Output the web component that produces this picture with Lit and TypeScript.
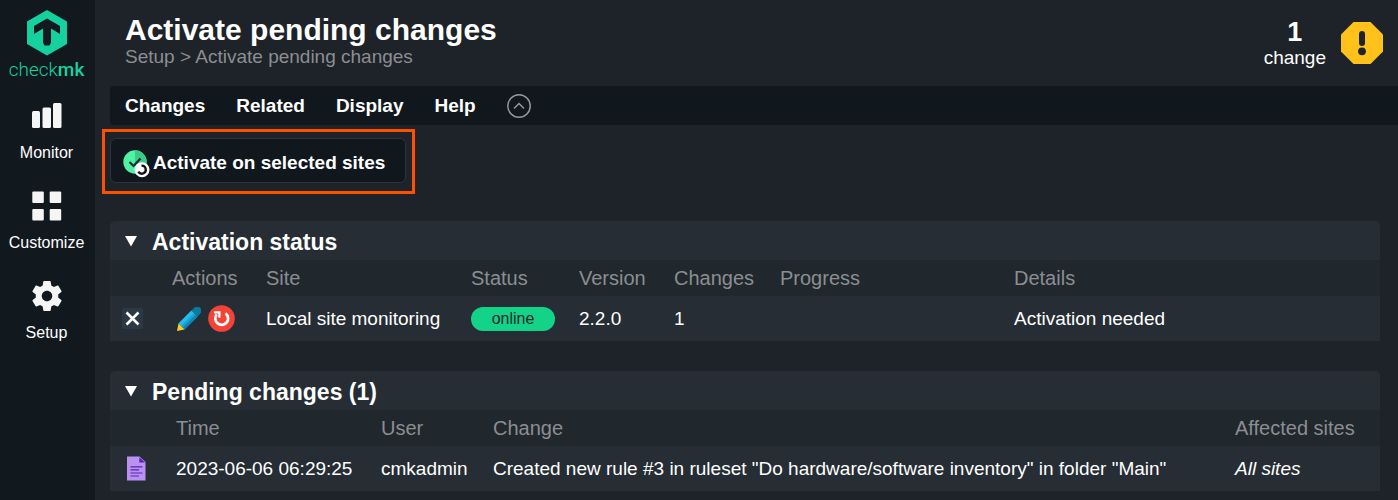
import { LitElement, html, css, svg } from "lit";
import { customElement, property, state } from "lit/decorators.js";

const icons = {
  logo: svg`<svg width="40" height="46" viewBox="0 0 40 46" aria-hidden="true">
    <path fill="#15d1a0" d="M20 0 40 11.500V34L20 45.500 0 34V11.500z"/>
    <path fill="#12191f" d="M20 8.500 33 16V24L24 18.500V32.500l-1.500 3h-5l-1.500-3V18.500L7 24V16z"/></svg>`,
  monitor: svg`<svg width="30" height="26" viewBox="0 0 30 26" aria-hidden="true" fill="#f5f5f5">
    <rect x="0" y="8" width="8" height="17" rx="1.500"/><rect x="10.500" y="4.500" width="8.500" height="20.500" rx="1.500"/><rect x="21" y="0" width="8.500" height="25" rx="1.500"/></svg>`,
  customize: svg`<svg width="30" height="30" viewBox="0 0 30 30" aria-hidden="true" fill="#f5f5f5">
    <rect width="11.500" height="11.500" x=".3" y=".5" rx="1"/><rect x="17.700" y=".5" width="11.500" height="11.500" rx="1"/><rect x=".3" y="18" width="11.500" height="11.500" rx="1"/><rect x="17.700" y="18" width="11.500" height="11.500" rx="1"/></svg>`,
  setup: svg`<svg width="36" height="36" viewBox="0 0 24 24" aria-hidden="true">
    <path fill="#f5f5f5" d="M19.430 12.980c.04-.32.07-.64.07-.98s-.03-.66-.07-.98l2.110-1.650c.19-.15.24-.42.12-.64l-2-3.460c-.12-.22-.39-.3-.61-.22l-2.490 1c-.52-.4-1.080-.73-1.690-.98l-.38-2.650C14.460 2.180 14.250 2 14 2h-4c-.25 0-.46.18-.49.42l-.38 2.650c-.61.25-1.170.59-1.690.98l-2.490-1c-.23-.09-.49 0-.61.22l-2 3.460c-.13.22-.07.49.12.64l2.110 1.650c-.04.32-.07.65-.07.98s.03.66.07.98l-2.110 1.650c-.19.15-.24.42-.12.64l2 3.460c.12.22.39.3.61.22l2.490-1c.52.4 1.080.73 1.690.98l.38 2.650c.03.24.24.42.49.42h4c.25 0 .46-.18.49-.42l.38-2.650c.61-.25 1.170-.59 1.690-.98l2.490 1c.23.09.49 0 .61-.22l2-3.460c.12-.22.07-.49-.12-.64l-2.110-1.650zM12 15.500c-1.930 0-3.500-1.570-3.500-3.500s1.570-3.500 3.500-3.500 3.500 1.570 3.500 3.500-1.570 3.500-3.500 3.500z"/></svg>`,
  warning: svg`<svg width="42" height="42" viewBox="0 0 42 42" aria-hidden="true">
    <path fill="#ffc21a" d="M12.500 0h17L42 12.500v17L29.500 42h-17L0 29.500v-17z"/>
    <rect x="18" y="9" width="6" height="15" rx="3" fill="#1e2229"/><circle cx="21" cy="29.300" r="3.900" fill="#1e2229"/></svg>`,
  collapse: svg`<svg width="24" height="24" viewBox="0 0 24 24" aria-hidden="true" fill="none" stroke="#96989b">
    <circle cx="12" cy="12" r="11.200" stroke-width="1.500"/><path stroke-width="1.500" d="m7 14.500 5-5 5 5"/></svg>`,
  activate: svg`<svg width="28" height="28" viewBox="0 0 28 28" aria-hidden="true">
    <circle cx="12" cy="12" r="11.700" fill="#4ff3a4"/><path fill="#3bcb87" d="M12 .3a11.700 11.700 0 0 1 0 23.400z"/>
    <path d="m6.500 12 4 4 7-7.500" fill="none" stroke="#1e2b33" stroke-width="2.200"/>
    <circle cx="19" cy="19.700" r="7.500" fill="#fff"/>
    <path d="M18.500 15.700a4 4 0 1 1-3.200 6" fill="none" stroke="#111" stroke-width="2.300"/></svg>`,
  edit: svg`<svg width="26" height="26" viewBox="0 0 26 26" aria-hidden="true">
    <path fill="#14a5d8" d="m2.500 17.500 13-13 6 6-13 13z"/><path fill="#2bb9ea" d="m2.500 17.500 13-13 2.500 2.500-13 13z"/>
    <path fill="#0b87b0" d="m8.500 23.500 13-13-1.800-1.800-13 13z"/>
    <path fill="#087ba0" d="m15.500 4.500 2.700-2.700a3 3 0 0 1 2.300-.8h1.500a3 3 0 0 1 3 3v1.200a3 3 0 0 1-.8 2.600l-2.700 2.700z"/>
    <path fill="#ffca28" d="m2.500 17.500 6 6L1 25z"/></svg>`,
  restart: svg`<svg width="27" height="27" viewBox="0 0 27 27" aria-hidden="true">
    <circle cx="13.500" cy="13.500" r="13.300" fill="#f44336"/>
    <path d="M17.500 8.300a6.400 6.400 0 1 1-8.700 1" fill="none" stroke="#fff" stroke-width="2.700"/>
    <path fill="#fff" d="M6 6.200h6.500v6.600h-2.200V8.400H6z"/></svg>`,
  document: svg`<svg width="19" height="25" viewBox="0 0 19 25" aria-hidden="true">
    <path fill="#b992ef" d="M0 .5h12.500L18.500 6v18.500H0z"/><path fill="#5b22b4" d="M12.300 1.200v5.300h5.700z"/>
    <path stroke="#5b22b4" stroke-width="1.200" d="M3.500 10.800h12M3.500 13.900h8.500M3.500 17h12M3.500 20h8.500"/></svg>`,
  arrow: svg`<svg width="12" height="11" viewBox="0 0 12 11" aria-hidden="true"><path fill="#fff" d="M0 0h12L6 10.500z"/></svg>`,
};

@customElement("side-nav")
class SideNav extends LitElement {
  static styles = css`
    :host { display: block; padding-right: 2px; background: #11181e; }
    .brand { display: flex; flex-direction: column; align-items: center; height: 89px; padding-top: 10px; box-sizing: border-box; color: #15d1a0; text-decoration: none; }
    .name { font: 300 19px/24px Roboto, sans-serif; margin-top: 2px; }
    .name b { font-weight: 500; }
    .nav { display: flex; flex-direction: column; }
    .item { display: flex; flex-direction: column; align-items: center; height: 90px; color: #fff; font-size: 16px; line-height: 20px; text-decoration: none; }
    .glyph { display: flex; align-items: center; justify-content: center; height: 54px; }
    .label { margin-top: 0; }
  `;
  private items = [
    { label: "Monitor", icon: icons.monitor },
    { label: "Customize", icon: icons.customize },
    { label: "Setup", icon: icons.setup },
  ];
  render() {
    return html`<a class="brand" href="#home">${icons.logo}<span class="name">check<b>mk</b></span></a>
      <nav class="nav">${this.items.map((i) => html`<a class="item" href="#${i.label}"><span class="glyph">${i.icon}</span><span class="label">${i.label}</span></a>`)}</nav>`;
  }
}

@customElement("fold-panel")
class FoldPanel extends LitElement {
  @property() heading = "";
  @state() private open = true;
  static styles = css`
    :host { display: block; background: #262d34; border-radius: 5px 5px 0 0; }
    .title { margin: 0; font-size: 23px; line-height: 39px; }
    .toggle { display: flex; align-items: center; gap: 15px; width: 100%; height: 39px; padding: 4px 15px 0; border: 0; background: none; color: #fff; font: inherit; line-height: 35px; text-align: left; }
    .toggle svg { margin-bottom: 3px; }
  `;
  render() {
    return html`<h2 class="title"><button class="toggle" aria-expanded=${this.open} @click=${() => (this.open = !this.open)}>${icons.arrow}${this.heading}</button></h2>
      ${this.open ? html`<slot></slot>` : ""}`;
  }
}

@customElement("app-root")
class AppRoot extends LitElement {
  static styles = css`
    :host { display: grid; grid-template-columns: 95px minmax(0, 1fr); min-height: 100vh; background: #1e2229; color: #fff; font: 19px/24px "Liberation Sans", Arial, sans-serif; }
    button { font: inherit; color: inherit; background: none; border: 0; padding: 0; }
    .main { padding-left: 15px; }
    .header { display: flex; justify-content: space-between; height: 86px; padding: 14px 15px 0; box-sizing: border-box; }
    .title { margin: 0; font-size: 30px; line-height: 32px; }
    .crumbs { color: #8c8e91; line-height: 22px; }
    .crumbs a { color: inherit; text-decoration: none; }
    .pending { display: flex; gap: 15px; padding-top: 4px; }
    .pending svg { margin-top: 4px; }
    .count { display: flex; flex-direction: column; text-align: center; }
    .count b { font-size: 27px; line-height: 28px; }
    .menu { display: flex; align-items: center; gap: 31px; height: 39px; padding: 0 15px; background: #10171d; border-radius: 4px 0 0 4px; font-weight: bold; }
    .menu svg { display: block; }
    .highlight { width: fit-content; margin: 4px 0 27px -8px; padding: 6px 6px 8px 5px; border: 3px solid #ff5000; }
    .activate { display: flex; align-items: center; gap: 2px; height: 45px; padding: 4px 20px 0 12px; background: #10171d; border: 1px solid #2c343e; border-radius: 6px; font-weight: bold; }
    .activate svg { margin-top: 2px; }
    .panels { display: flex; flex-direction: column; gap: 30px; padding: 0 18px 9px 0; }
    .grid { width: 100%; table-layout: fixed; border-collapse: collapse; white-space: nowrap; }
    .grid th { height: 36px; padding: 0; background: #20272d; color: #8c8e91; font-size: 20px; font-weight: normal; text-align: left; }
    .grid td { height: 45px; padding: 0; }
    .grid .lead { padding-left: 12px; }
    .lead svg { display: block; margin-left: 5px; }
    .w-lead { width: 62px; } .w-act { width: 94px; } .w-site { width: 205px; } .w-status { width: 108px; }
    .w-ver { width: 95px; } .w-chg { width: 106px; } .w-prog { width: 234px; }
    .w-icon { width: 66px; } .w-time { width: 205px; } .w-user { width: 112px; } .w-aff { width: 145px; }
    .check { display: block; appearance: none; width: 21px; height: 21px; margin: 0; border-radius: 2px; background: #2c3845; }
    .check:checked { background: #2c3845 url("data:image/svg+xml,%3Csvg xmlns='http://www.w3.org/2000/svg' viewBox='0 0 21 21'%3E%3Cpath d='m4.500 4.500 12 12m0-12-12 12' stroke='white' stroke-width='2.600'/%3E%3C/svg%3E"); }
    .actions { display: flex; gap: 6px; padding-left: 4px; }
    .actions svg { display: block; }
    .online { display: block; width: 84px; border-radius: 12px; background: #13d389; color: #1e262e; font-size: 16px; line-height: 24px; text-align: center; }
  `;
  render() {
    return html`
      <side-nav></side-nav>
      <main class="main">
        <header class="header">
          <div>
            <h1 class="title">Activate pending changes</h1>
            <div class="crumbs"><a href="#setup">Setup</a> &gt; <a href="#activate">Activate pending changes</a></div>
          </div>
          <div class="pending"><div class="count"><b>1</b><span>change</span></div>${icons.warning}</div>
        </header>
        <nav class="menu">
          ${["Changes", "Related", "Display", "Help"].map((m) => html`<button>${m}</button>`)}
          <button aria-label="Hide page actions">${icons.collapse}</button>
        </nav>
        <div class="highlight"><button class="activate">${icons.activate}Activate on selected sites</button></div>
        <div class="panels">
          <fold-panel heading="Activation status">
            <table class="grid">
              <colgroup><col class="w-lead"><col class="w-act"><col class="w-site"><col class="w-status"><col class="w-ver"><col class="w-chg"><col class="w-prog"><col></colgroup>
              <thead><tr><th></th><th>Actions</th><th>Site</th><th>Status</th><th>Version</th><th>Changes</th><th>Progress</th><th>Details</th></tr></thead>
              <tbody><tr>
                <td class="lead"><input class="check" type="checkbox" checked aria-label="Local site monitoring"></td>
                <td><div class="actions"><button aria-label="Edit">${icons.edit}</button><button aria-label="Restart">${icons.restart}</button></div></td>
                <td>Local site monitoring</td><td><span class="online">online</span></td><td>2.2.0</td><td>1</td><td></td><td>Activation needed</td>
              </tr></tbody>
            </table>
          </fold-panel>
          <fold-panel heading="Pending changes (1)">
            <table class="grid">
              <colgroup><col class="w-icon"><col class="w-time"><col class="w-user"><col><col class="w-aff"></colgroup>
              <thead><tr><th></th><th>Time</th><th>User</th><th>Change</th><th>Affected sites</th></tr></thead>
              <tbody><tr>
                <td class="lead">${icons.document}</td><td>2023-06-06 06:29:25</td><td>cmkadmin</td>
                <td>Created new rule #3 in ruleset "Do hardware/software inventory" in folder "Main"</td><td><em>All sites</em></td>
              </tr></tbody>
            </table>
          </fold-panel>
        </div>
      </main>`;
  }
}
